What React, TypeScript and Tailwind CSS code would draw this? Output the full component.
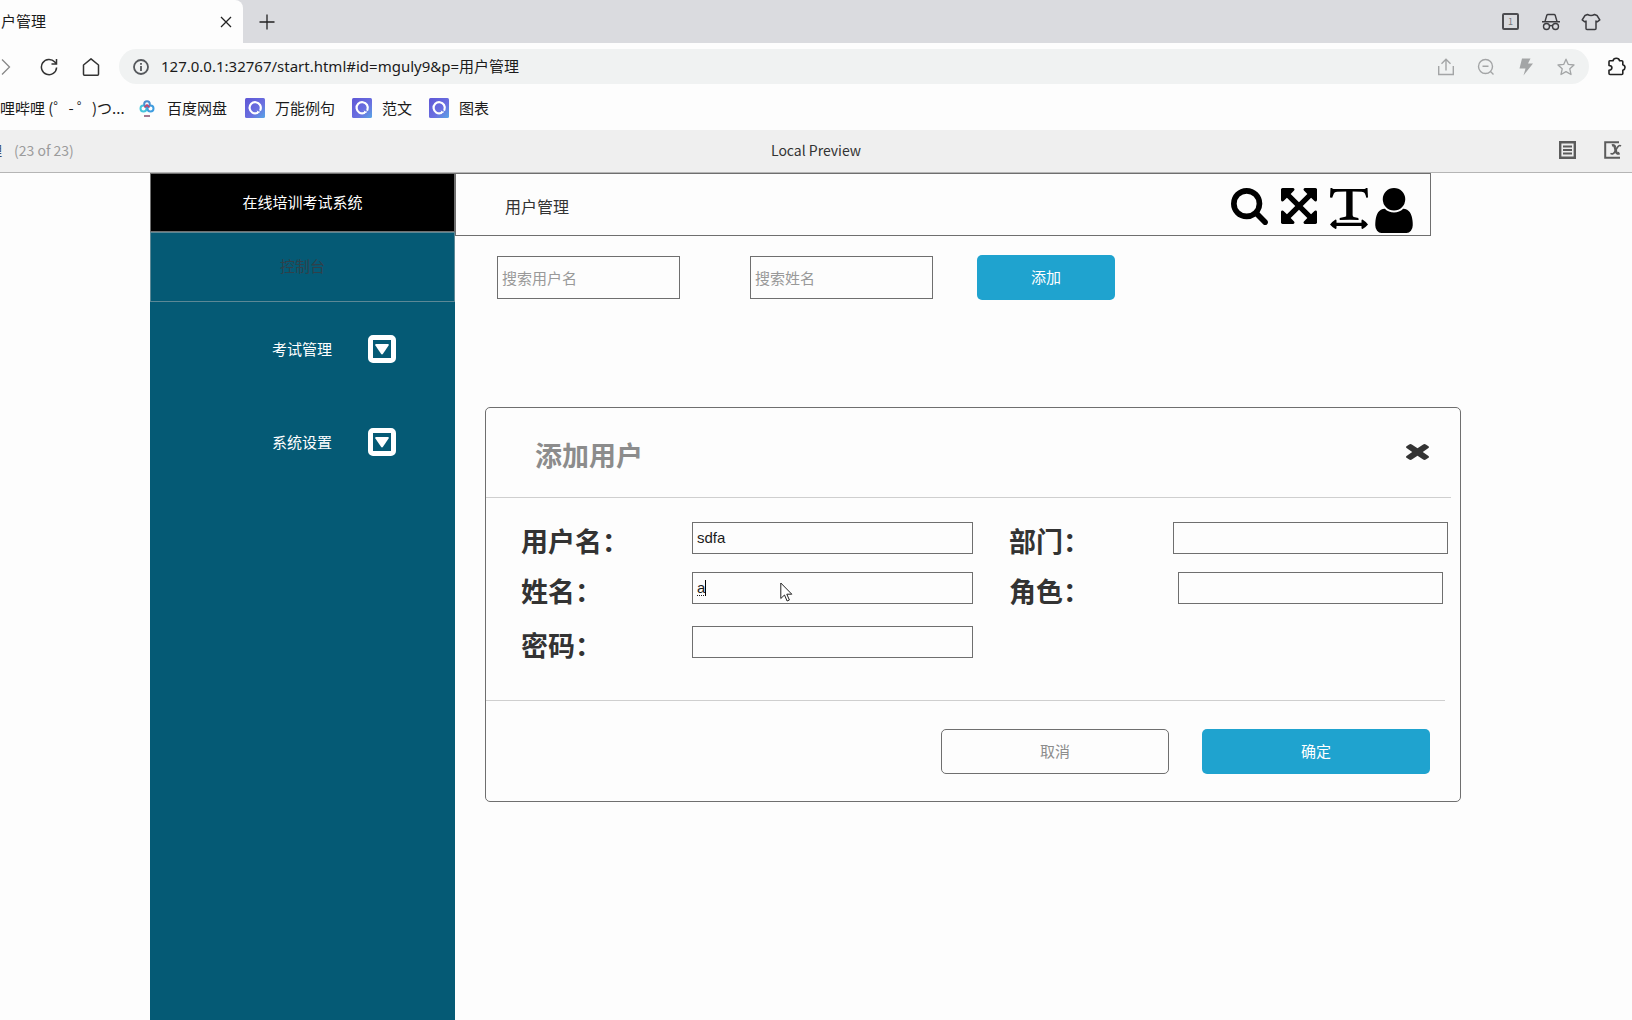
import React from 'react'

const bookmarks = [
  { id: 1, name: '万能例句' },
  { id: 2, name: '范文' },
  { id: 3, name: '图表' },
]

const menus = [
  { id: 1, name: '考试管理' },
  { id: 2, name: '系统设置' },
]

const inputStyle = 'h-8 border border-[#6f6f6f] bg-[#fdfdfd] outline-none px-1 pb-0.5'
const searchStyle = 'w-[183px] h-[43px] border border-[#6f6f6f] bg-[#fdfdfd] outline-none px-1 placeholder:text-[#999]'
const labelStyle = 'pt-[3px] text-[27px] leading-8 font-bold text-[#333]'

const BookmarkLogo: React.FC = () => (
  <svg viewBox="0 0 20 20" className="w-5 h-5" aria-hidden="true">
    <defs>
      <linearGradient id="mark" x1="0" y1="0" x2="1" y2="1">
        <stop offset="0" stopColor="#5f57d6" />
        <stop offset="0.6" stopColor="#6a70e0" />
        <stop offset="1" stopColor="#59a6e6" />
      </linearGradient>
    </defs>
    <rect width="20" height="20" rx="1.5" fill="url(#mark)" />
    <path d="M12.200 15A5.600 5.600 0 1 1 15.400 11.800" fill="none" stroke="#fff" strokeWidth="2.200" strokeLinecap="round" />
    <path d="M11.800 12.200q1 1.800 3.600 1.300-.8 2-3.200 1.800z" fill="#fff" />
  </svg>
)

const CaretSquare: React.FC = () => (
  <svg viewBox="0 0 28 28" className="w-7 h-7" aria-hidden="true">
    <rect x="2.5" y="2.5" width="23" height="23" rx="2.5" fill="none" stroke="#fff" strokeWidth="5" />
    <path d="M8 9h12q1.4.2.6 1.6l-5.6 8.2q-1 1.2-2 0L7.400 10.600Q6.600 9.200 8 9z" fill="#fff" />
  </svg>
)

const TabStrip: React.FC = () => (
  <div className="flex h-[43px] bg-[#dadbdf]">
    <div className="flex items-center justify-between w-[243px] pr-[11px] bg-[#fdfdfd] rounded-tr-lg">
      <span className="text-[15px] pl-px">户管理</span>
      <button aria-label="关闭标签页">
        <svg viewBox="0 0 12 12" className="w-3 h-3" stroke="#222" strokeWidth="1.300"><path d="M1 1l10 10M11 1L1 11" /></svg>
      </button>
    </div>
    <button aria-label="新标签页" className="pl-4">
      <svg viewBox="0 0 16 16" className="w-4 h-4" stroke="#222" strokeWidth="1.300"><path d="M8 .5v15M.5 8h15" /></svg>
    </button>
    <div className="flex items-center gap-5 ml-auto pr-[31px] text-[#3c3c40]">
      <button className="flex items-center justify-center w-[17px] h-[17px] mr-0.5 border-2 border-[#4c4c50] rounded-xs text-[9px] text-[#777]">1</button>
      <button aria-label="无痕">
        <svg viewBox="0 0 20 18" className="w-5 h-[18px]" fill="none" stroke="currentColor" strokeWidth="1.400" strokeLinejoin="round">
          <path d="M1 8.800h18M4 8.500l1.800-6.200Q6 1.500 7 1.500h6q1 0 1.200.8L16 8.500" />
          <circle cx="5.500" cy="13.500" r="3" /><circle cx="14.500" cy="13.500" r="3" /><path d="M8.500 13q1.500-1 3 0" />
        </svg>
      </button>
      <button aria-label="皮肤">
        <svg viewBox="0 0 20 18" className="w-5 h-[18px]" fill="none" stroke="currentColor" strokeWidth="1.500" strokeLinejoin="round">
          <path d="M6.500 1.500q3.500 2 7 0L16 2.500l2.800 4.300-2.600 2-1.200-.8v7.500q0 1-1 1H6q-1 0-1-1V8l-1.200.8-2.600-2L4 2.500z" />
        </svg>
      </button>
    </div>
  </div>
)

const AddressBar: React.FC = () => (
  <div className="flex items-center h-[47px]">
    <button aria-label="前进" className="w-3">
      <svg viewBox="0 0 12 18" className="w-3 h-[18px]" fill="none" stroke="#888" strokeWidth="1.300"><path d="M2 1.500L9.500 9 2 16.500" /></svg>
    </button>
    <button aria-label="刷新" className="ml-7">
      <svg viewBox="0 0 18 18" className="w-[18px] h-[18px]" fill="none" stroke="#333" strokeWidth="1.500">
        <path d="M16.600 9.500A7.600 7.600 0 1 1 14.800 4.100L16.300 5.800" /><path d="M16.500 1v5h-5" />
      </svg>
    </button>
    <button aria-label="主页" className="ml-6">
      <svg viewBox="0 0 18 18" className="w-[18px] h-[18px]" fill="none" stroke="#333" strokeWidth="1.500" strokeLinejoin="round">
        <path d="M1.500 7L9 .8 16.500 7v9.300q0 .9-.9.9H2.400q-.9 0-.9-.9z" />
      </svg>
    </button>
    <div className="flex flex-1 items-center h-[35px] ml-[19px] pl-3.5 pr-3.5 rounded-full bg-[#f0f2f2]">
      <svg viewBox="0 0 16 16" className="w-4 h-4" fill="none" stroke="#55585c" strokeWidth="1.800" aria-hidden="true">
        <circle cx="8" cy="8" r="7" /><path d="M8 7v5M8 4v1.800" />
      </svg>
      <input
        aria-label="地址"
        className="flex-1 ml-3 text-[15px] outline-none font-['Noto_Sans','Noto_Sans_CJK_SC',sans-serif]"
        defaultValue="127.0.0.1:32767/start.html#id=mguly9&p=用户管理"
      />
      <div className="flex items-center gap-[22px] text-[#a3a5a6]">
        <button aria-label="分享">
          <svg viewBox="0 0 18 18" className="w-[18px] h-[18px]" fill="none" stroke="currentColor" strokeWidth="1.400">
            <path d="M1.700 8v8.500h14.600V8M9 12.500V1.500M4.500 5.800L9 1.300l4.500 4.500" />
          </svg>
        </button>
        <button aria-label="缩小">
          <svg viewBox="0 0 18 18" className="w-[18px] h-[18px]" fill="none" stroke="currentColor" strokeWidth="1.400">
            <circle cx="8.500" cy="8.500" r="7" /><path d="M5.500 8.200h6M13.500 13.500l3 3" />
          </svg>
        </button>
        <button aria-label="极速模式">
          <svg viewBox="0 0 18 18" className="w-[18px] h-[18px]" fill="currentColor"><path d="M5 .5h8.500l-2.500 5h5L6.500 17.500l2-7H2.500z" /></svg>
        </button>
        <button aria-label="收藏">
          <svg viewBox="0 0 18 18" className="w-[18px] h-[18px]" fill="none" stroke="currentColor" strokeWidth="1.300" strokeLinejoin="round">
            <path d="M9 1.200l2.300 5.200 5.700.6-4.200 3.800 1.200 5.700L9 13.600 4 16.500l1.200-5.700L1 7l5.700-.6z" />
          </svg>
        </button>
      </div>
    </div>
    <button aria-label="扩展" className="ml-[18px] mr-1.5">
      <svg viewBox="0 0 19 19" className="w-[19px] h-[19px]" fill="none" stroke="#222" strokeWidth="1.600" strokeLinejoin="round">
        <path d="M2.800 3.800h3.200Q6.500 1.300 9.300 1.300t3.300 2.500h2.200q1 0 1 1v3q2.200.5 2.200 2.600t-2.200 2.800v3.300q0 1-1 1H3q-1 0-1-1v-3.200q2.900-.3 2.900-2.500T2 8.500V4.800q0-1 .8-1z" />
      </svg>
    </button>
  </div>
)

const Bookmarks: React.FC = () => (
  <div className="flex items-center h-10 pb-1 text-[15px]">
    <a href="#" className="w-[118px] whitespace-nowrap">哩哔哩 (゜- ゜)つ...</a>
    <a href="#" className="flex items-center gap-[11px] ml-5">
      <svg viewBox="0 0 18 18" className="w-[18px] h-[18px]" fill="none" strokeWidth="2" aria-hidden="true">
        <circle cx="5.500" cy="9.500" r="3" stroke="#45c5dc" /><circle cx="12.500" cy="9.500" r="3" stroke="#3f9de0" />
        <circle cx="9" cy="5" r="2.800" stroke="#4a8fd0" /><path d="M6.500 8.500l2.500-2.500 2.500 2.500" stroke="#c6456b" strokeWidth="1.600" />
        <path d="M6 17h6" stroke="#7d3f62" strokeWidth="1.400" />
      </svg>
      百度网盘
    </a>
    <div className="flex items-center gap-[17px] ml-[18px]">
      {bookmarks.map((bookmark) =>
        (<a href="#" key={bookmark.id} className="flex items-center gap-2.5">
          <BookmarkLogo />
          {bookmark.name}
        </a>)
      )}
    </div>
  </div>
)

const PreviewBar: React.FC = () => (
  <div className="grid grid-cols-3 items-center h-[43px] pb-0.5 bg-[#efefef] border-b border-[#b5b5b5] text-sm">
    <div className="flex gap-3 text-[#9b9b9b]">
      <span className="w-0.5 flex justify-end text-[#3b4b66]">理</span>
      <span>(23 of 23)</span>
    </div>
    <span className="text-center text-[#333]">Local Preview</span>
    <div className="flex justify-end gap-7 pr-2.5">
      <button aria-label="说明">
        <svg viewBox="0 0 17 18" className="w-[17px] h-[18px]" fill="none" stroke="#5c5c5c" strokeWidth="2.400"><path d="M1.200 1.200h14.600v15.600H1.200z" /><path d="M4 5.500h9M4 9h9M4 12.500h9" strokeWidth="2" /></svg>
      </button>
      <button aria-label="变量">
        <svg viewBox="0 0 18 18" className="w-[18px] h-[18px]" fill="none" stroke="#5c5c5c" strokeWidth="2">
          <path d="M15 1.200H1.200v15.600H16" />
          <path d="M8 4.500q2.500-1 3 2l1 4q.8 3 3.500 1.500" strokeWidth="2.600" /><path d="M17 5q-2-1.500-4 2l-2 3.500q-2 3.500-4.500 1.800" strokeWidth="1.600" />
        </svg>
      </button>
    </div>
  </div>
)

const Sidebar: React.FC = () => (
  <nav className="w-[305px] shrink-0 bg-[#055a75] text-[15px] text-white">
    <h1 className="flex items-center justify-center h-[59px] bg-black border border-[#707070]">在线培训考试系统</h1>
    <a href="#" className="flex items-center justify-center h-[70px] pb-0.5 border border-[#5c8896] text-[#2f414a]">控制台</a>
    <div className="flex flex-col gap-[65px] pt-[33px]">
      {menus.map((menu) =>
        (<button key={menu.id} className="flex items-center justify-end gap-9 pr-[59px]">
          {menu.name}
          <CaretSquare />
        </button>)
      )}
    </div>
  </nav>
)

const Header: React.FC = () => (
  <header className="flex justify-between h-[63px] mr-[30px] pl-[49px] pr-[17px] border border-[#6f6f6f]">
    <h2 className="self-center pt-0.5 text-base text-[#333]">用户管理</h2>
    <div className="flex items-start gap-[13px] pt-3.5">
      <button aria-label="搜索">
        <svg viewBox="64 128 1664 1664" className="w-[37px] h-[37px]"><path d="M1216 832q0-185-131.500-316.500t-316.500-131.500-316.500 131.500-131.500 316.500 131.500 316.500 316.500 131.500 316.500-131.500 131.500-316.500zm512 832q0 52-38 90t-90 38q-54 0-90-38l-343-342q-179 124-399 124-143 0-273.500-55.500t-225-150-150-225-55.500-273.500 55.500-273.500 150-225 225-150 273.500-55.500 273.500 55.500 225 150 150 225 55.500 273.500q0 220-124 399l343 343q37 37 37 90z" /></svg>
      </button>
      <button aria-label="全屏">
        <svg viewBox="128 128 1536 1536" className="w-9 h-9"><path d="M1411 541l-355 355 355 355 144-144q29-31 70-14 39 17 39 59v448q0 26-19 45t-45 19h-448q-42 0-59-40-17-39 14-69l144-144-355-355-355 355 144 144q31 30 14 69-17 40-59 40h-448q-26 0-45-19t-19-45v-448q0-42 40-59 39-17 69 14l144 144 355-355-355-355-144 144q-19 19-45 19-12 0-24-5-40-17-40-59v-448q0-26 19-45t45-19h448q42 0 59 40 17 39-14 69l-144 144 355 355 355-355-144-144q-31-30-14-69 17-40 59-40h448q26 0 45 19t19 45v448q0 42-39 59-13 5-25 5-26 0-45-19z" /></svg>
      </button>
      <div className="flex items-start gap-[7px]">
        <button aria-label="字体宽度">
          <svg viewBox="0 0 38 41" className="w-[38px] h-[41px]">
            <path d="M.5 0h1.300l1 .8q.5.300 2 .3h28.400q1.500 0 2-.3l1-.8h1.300l.5 9.500-1.700.3q-.7-3-1.700-4.700-.6-1.200-3-1.400l-9-.2v23.500q0 1.500 1.200 2l4.500 1 .4 2q-3.600-.2-9-.2t-10 .2v-2l5.500-1.200q1.300-.4 1.300-1.800V3.500l-9.500.3q-2.500.1-3 1.500-.8 1.500-1.800 4.500L0 9.500z" />
            <path d="M16.400 3h5.400v25h-5.400z" />
            <path d="M5.500 31.500q-2.500 1.500-5.500 5 3 3.500 5.500 4.500 1 0 1-1v-2h25v2q0 1 1 1 2.500-1 5.500-4.500-3-3.500-5.500-5-1 0-1 1v2.200h-25v-2.200q0-1-1-1z" />
          </svg>
        </button>
        <button aria-label="用户">
          <svg viewBox="256 128 1280 1536" className="w-[38px] h-[45px]"><path d="M1536 1399q0 109-62.500 187t-150.500 78h-854q-88 0-150.500-78t-62.500-187q0-85 8.500-160.500t31.500-152 58.500-131 94-89 134.500-34.500q131 128 313 128t313-128q76 0 134.500 34.500t94 89 58.500 131 31.500 152 8.500 160.500zm-256-887q0 159-112.500 271.500t-271.500 112.500-271.500-112.500-112.500-271.500 112.500-271.500 271.500-112.500 271.500 112.500 112.500 271.500z" /></svg>
        </button>
      </div>
    </div>
  </header>
)

const UserDialog: React.FC = () => (
  <section role="dialog" aria-label="添加用户" className="h-[395px] ml-[30px] border border-[#6f6f6f] rounded-[5px] bg-[#fdfdfd]">
    <div className="flex items-center justify-between h-[90px] mr-[9px] pt-1.5 pl-[49px] pr-[22px] border-b border-[#cfcfcf]">
      <h3 className="text-[27px] font-bold text-[#8c8c8c]">添加用户</h3>
      <button aria-label="关闭" className="pb-2">
        <svg viewBox="302 366 1188 1188" preserveAspectRatio="none" className="w-[23px] h-4" fill="#333"><path d="M1490 1322q0 40-28 68l-136 136q-28 28-68 28t-68-28l-294-294-294 294q-28 28-68 28t-68-28l-136-136q-28-28-28-68t28-68l294-294-294-294q-28-28-28-68t28-68l136-136q28-28 68-28t68 28l294 294 294-294q28-28 68-28t68 28l136 136q28 28 28 68t-28 68l-294 294 294 294q28 28 28 68z" /></svg>
      </button>
    </div>
    <form className="flex justify-between h-[202px] mr-3 pt-6 pl-[35px]">
      <div className="grid grid-cols-[171px_281px] grid-rows-[50px_54px_32px] items-start">
        <label htmlFor="username" className={labelStyle}>用户名：</label>
        <input id="username" className={inputStyle + " text-[15px] font-['Liberation_Sans',sans-serif]"} defaultValue="sdfa" />
        <label htmlFor="name" className={labelStyle}>姓名：</label>
        <div className="relative flex">
          <input id="name" className={inputStyle + " w-full text-[15px] underline decoration-dotted decoration-1 underline-offset-2 font-['Liberation_Sans',sans-serif]"} defaultValue="a" />
          <span className="absolute left-[13px] top-2 w-px h-4 bg-black" />
          {/* mouse pointer */}
          <svg viewBox="0 0 13 20" className="absolute left-[88px] top-2.5 w-[13px] h-5" fill="#fff" stroke="#222" aria-hidden="true">
            <path d="M.8 1v15.500l3.700-3.500 2.600 6 2.300-1-2.600-5.800h5z" />
          </svg>
        </div>
        <label htmlFor="password" className={labelStyle}>密码：</label>
        <input id="password" className={inputStyle} />
      </div>
      <div className="grid grid-cols-[164px_275px] grid-rows-[50px_54px_32px] items-start">
        <label htmlFor="department" className={labelStyle}>部门：</label>
        <input id="department" className={inputStyle} />
        <label htmlFor="role" className={labelStyle}>角色：</label>
        <input id="role" className={inputStyle + ' mx-[5px]'} />
      </div>
    </form>
    <div className="flex justify-end gap-[33px] mr-[15px] pt-7 pr-[15px] border-t border-[#cfcfcf] text-[15px]">
      <button className="w-[228px] h-[45px] border border-[#6f6f6f] rounded-[5px] text-[#8c8c8c]">取消</button>
      <button className="w-[228px] h-[45px] rounded-[5px] bg-[#1fa3cf] text-white">确定</button>
    </div>
  </section>
)

const App: React.FC = () => {
  return (
    <div className="flex flex-col min-h-screen bg-[#fdfdfd] text-[#1b1b1b] font-['Noto_Sans_CJK_SC',sans-serif]">
      <TabStrip />
      <AddressBar />
      <Bookmarks />
      <PreviewBar />
      <div className="flex flex-1 pl-[150px]">
        <Sidebar />
        <main className="flex-1 pr-[171px]">
          <Header />
          <div className="flex items-center pt-[19px] pl-[42px] pb-[107px] text-[15px]">
            <input aria-label="搜索用户名" placeholder="搜索用户名" className={searchStyle + ' mr-[70px]'} />
            <input aria-label="搜索姓名" placeholder="搜索姓名" className={searchStyle + ' mr-11'} />
            <button className="w-[138px] h-[45px] rounded-[5px] bg-[#1fa3cf] text-white">添加</button>
          </div>
          <UserDialog />
        </main>
      </div>
    </div>
  )
}

export default App
